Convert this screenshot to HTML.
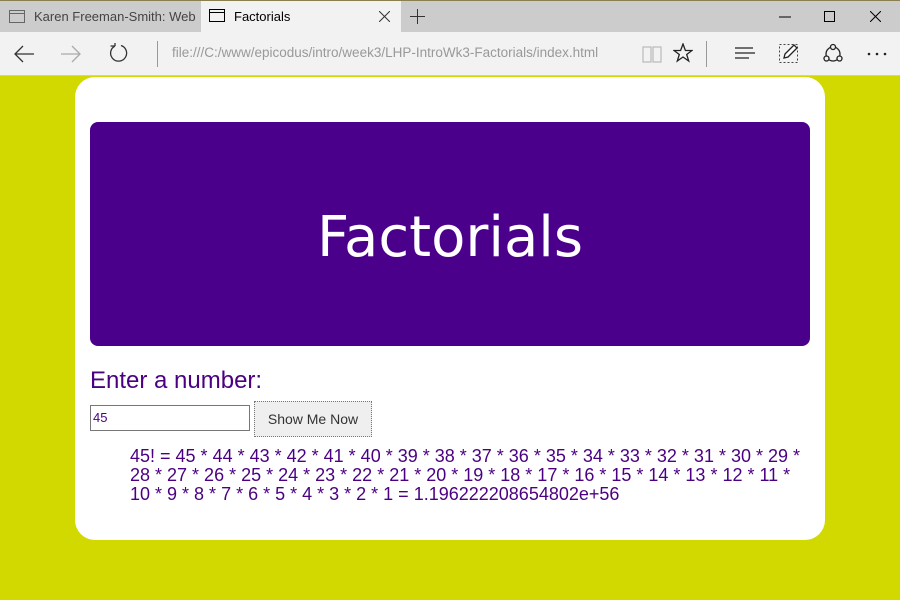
<!DOCTYPE html>
<html><head><style>
body{margin:0;width:900px;height:600px;background:#d1d900;font-family:"Liberation Sans",sans-serif;overflow:hidden;position:relative}
.tabs{position:absolute;left:0;top:0;width:900px;height:32px;background:#cccccc;border-top:1px solid #8c7f4f;box-sizing:border-box}
.tab{position:absolute;top:0;height:32px;font-size:13px;line-height:32px;color:#444}
.tb{position:absolute;top:32px;left:0;width:900px;height:44px;background:#f2f2f2;border-bottom:1px solid #ccc;box-sizing:border-box}
.ic{position:absolute}
.card{position:absolute;left:75px;top:77px;width:750px;height:463px;background:#fff;border-radius:20px}
.hero{position:absolute;left:15px;top:45px;width:720px;height:224px;background:#4b008c;border-radius:8px;color:#fff;font-family:"Comic Sans MS","DejaVu Sans",sans-serif;font-size:56px;text-align:center;line-height:232px}
.lab{position:absolute;left:15px;top:290px;font-size:24px;color:#4b0082}
.inp{position:absolute;left:15px;top:328px;width:160px;height:26px;border:1px solid #777;box-sizing:border-box;font-size:13px;color:#4b0082;line-height:24px;padding-left:2px}
.btn{position:absolute;left:179px;top:324px;width:118px;height:36px;border:1px dotted #777;background:#efefef;box-sizing:border-box;font-size:14px;color:#333;text-align:center;line-height:34px}
.res{position:absolute;left:55px;top:370px;width:700px;font-size:18px;line-height:19px;color:#4b0082;white-space:nowrap}
</style></head><body>
<div class="tabs">
 <div class="tab" style="left:0;width:201px"><svg class="ic" style="left:9px;top:9px" width="16" height="13"><rect x=".5" y=".5" width="15" height="12" fill="none" stroke="#666"/><line x1="0" y1="3.5" x2="16" y2="3.5" stroke="#666"/></svg><span style="position:absolute;left:34px;white-space:nowrap">Karen Freeman-Smith: Web</span></div>
 <div class="tab" style="left:201px;width:200px;background:#f2f2f2;top:0;color:#000"><svg class="ic" style="left:8px;top:8px" width="16" height="13"><rect x=".5" y=".5" width="15" height="12" fill="none" stroke="#000"/><line x1="0" y1="3.5" x2="16" y2="3.5" stroke="#000"/></svg><span style="position:absolute;left:33px">Factorials</span><svg class="ic" style="left:178px;top:10px" width="11" height="11"><path d="M0 0L11 11M11 0L0 11" stroke="#333"/></svg></div>
 <svg class="ic" style="left:410px;top:8px" width="15" height="15"><path d="M7.5 0V15M0 7.5H15" stroke="#333"/></svg>
 <svg class="ic" style="left:779px;top:15px" width="12" height="2"><path d="M0 1H12" stroke="#000"/></svg>
 <svg class="ic" style="left:824px;top:10px" width="11" height="11"><rect x=".5" y=".5" width="10" height="10" fill="none" stroke="#000"/></svg>
 <svg class="ic" style="left:870px;top:10px" width="11" height="11"><path d="M0 0L11 11M11 0L0 11" stroke="#000"/></svg>
</div>
<div class="tb">
 <svg class="ic" style="left:14px;top:13px" width="20" height="18"><path d="M20 9H1M9 1L1 9L9 17" fill="none" stroke="#333" stroke-width="1.3"/></svg>
 <svg class="ic" style="left:61px;top:13px" width="20" height="18"><path d="M0 9H19M11 1L19 9L11 17" fill="none" stroke="#aaa" stroke-width="1.3"/></svg>
 <svg class="ic" style="left:109px;top:11px" width="20" height="20"><path d="M6 3A8 8 0 1 0 12 2.5M6 3V-1M6 3H1.5" fill="none" stroke="#333" stroke-width="1.3"/></svg>
 <div class="ic" style="left:157px;top:9px;width:1px;height:26px;background:#999"></div>
 <div class="ic" style="left:172px;top:13px;font-size:13.5px;color:#999">file:///C:/www/epicodus/intro/week3/LHP-IntroWk3-Factorials/index.html</div>
 <svg class="ic" style="left:642px;top:13px" width="20" height="18"><path d="M1 2H9V17H1ZM11 2H19V17H11Z" fill="none" stroke="#bbb" stroke-width="1.2"/></svg>
 <svg class="ic" style="left:673px;top:11px" width="20" height="20"><path d="M10 1L12.4 7.5H19L13.7 11.5L15.7 18L10 14L4.3 18L6.3 11.5L1 7.5H7.6Z" fill="none" stroke="#222" stroke-width="1.3"/></svg>
 <div class="ic" style="left:706px;top:9px;width:1px;height:26px;background:#999"></div>
 <svg class="ic" style="left:734px;top:14px" width="22" height="16"><path d="M1 2H19M1 7H21M1 12H15" stroke="#222" stroke-width="1.3"/></svg>
 <svg class="ic" style="left:778px;top:11px" width="22" height="22"><rect x="1.5" y="1.5" width="18" height="18" fill="none" stroke="#444" stroke-dasharray="2 2"/><path d="M6 15L7 11L16 2L19 5L10 14Z" fill="#fff" stroke="#222" stroke-width="1.3"/></svg>
 <svg class="ic" style="left:822px;top:11px" width="22" height="22"><circle cx="11" cy="11" r="7" fill="none" stroke="#222" stroke-width="1.3"/><circle cx="11" cy="4" r="2.5" fill="#f2f2f2" stroke="#222" stroke-width="1.3"/><circle cx="4.5" cy="15.5" r="2.5" fill="#f2f2f2" stroke="#222" stroke-width="1.3"/><circle cx="17.5" cy="15.5" r="2.5" fill="#f2f2f2" stroke="#222" stroke-width="1.3"/></svg>
 <svg class="ic" style="left:867px;top:20px" width="20" height="4"><circle cx="2" cy="2" r="1.3" fill="#222"/><circle cx="10" cy="2" r="1.3" fill="#222"/><circle cx="18" cy="2" r="1.3" fill="#222"/></svg>
</div>
<div class="card">
 <div class="hero">Factorials</div>
 <div class="lab">Enter a number:</div>
 <div class="inp">45</div>
 <div class="btn">Show Me Now</div>
 <div class="res">45! = 45 * 44 * 43 * 42 * 41 * 40 * 39 * 38 * 37 * 36 * 35 * 34 * 33 * 32 * 31 * 30 * 29 *<br>28 * 27 * 26 * 25 * 24 * 23 * 22 * 21 * 20 * 19 * 18 * 17 * 16 * 15 * 14 * 13 * 12 * 11 *<br>10 * 9 * 8 * 7 * 6 * 5 * 4 * 3 * 2 * 1 = 1.196222208654802e+56</div>
</div>
</body></html>
